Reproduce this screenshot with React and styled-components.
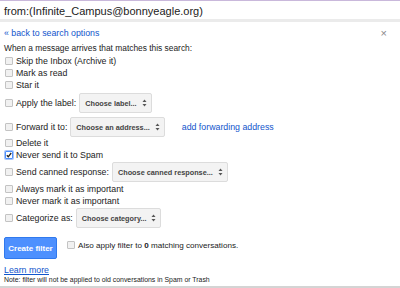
import React from 'react';
import styled, { createGlobalStyle } from 'styled-components';

const GlobalStyle = createGlobalStyle`
    html, body {
        margin: 0;
        padding: 0;
        background: #fff;
    }
    body {
        font-family: 'Liberation Sans', Arial, sans-serif;
        color: #222;
        width: 400px;
        height: 288px;
        overflow: hidden;
    }
`;

const PAGE = styled.div`
    width: 400px;
    height: 288px;
    display: flex;
    flex-direction: column;
    box-sizing: border-box;
    border-bottom: 2px solid #d4d4d4;
`;

const SEARCH_BAR = styled.div`
    height: 22px;
    box-sizing: border-box;
    border-top: 1px solid #c9b8db;
    border-bottom: 3px solid #ebebeb;
    padding: 0 4px;
    font-size: 11px;
    line-height: 20px;
    color: #222;
`;

const PANEL = styled.div`
    flex: 1;
    display: flex;
    flex-direction: column;
    padding: 4px 4px 0 4px;
`;

const TOP_ROW = styled.div`
    display: flex;
    justify-content: space-between;
    align-items: center;
    height: 12px;
    margin-top: 1px;
`;

const LINK = styled.a`
    color: #1155cc;
    font-size: 8.8px;
    text-decoration: ${p => (p.underline ? 'underline' : 'none')};
    margin-left: ${p => p.ml || 0}px;
    cursor: pointer;
`;

const CLOSE = styled.span`
    color: #8a8a8a;
    font-size: 11px;
    margin-right: 9px;
`;

const INTRO = styled.div`
    font-size: 8.4px;
    margin-top: 3px;
    height: 12px;
    line-height: 12px;
`;

const ROW = styled.div`
    display: flex;
    align-items: center;
    height: ${p => (p.tall ? 20 : 12)}px;
    margin-top: ${p => p.mt || 0}px;
    font-size: 8.8px;
    color: #222;
    white-space: nowrap;
`;

const BOX = styled.span`
    width: 8px;
    height: 8px;
    box-sizing: border-box;
    margin: 0 3px 0 1px;
    border: 1px solid ${p => (p.checked ? '#4d90fe' : '#c3c3c3')};
    border-radius: 1px;
    background: ${p => (p.checked ? '#fff' : '#f1f1f1')};
    box-shadow: ${p => (p.checked ? '0 0 0 1px #a9c5f8' : 'none')};
    display: inline-flex;
    align-items: center;
    justify-content: center;
    flex-shrink: 0;
`;

const SELECT = styled.span`
    display: inline-flex;
    align-items: center;
    gap: 5px;
    height: 20px;
    box-sizing: border-box;
    margin-left: 3px;
    padding: 0 4px 0 5px;
    background: #f3f3f3;
    border: 1px solid #dcdcdc;
    border-radius: 2px;
    font-size: 7.3px;
    font-weight: bold;
    color: #444;
`;

const FOOT = styled.div`
    display: flex;
    align-items: flex-start;
    margin-top: 9px;
    height: 22px;
`;

const BUTTON = styled.button`
    width: 53px;
    height: 22px;
    padding: 0;
    background: #4d90fe;
    border: 1px solid #3079ed;
    border-radius: 2px;
    color: #fff;
    font-family: 'Liberation Sans', Arial, sans-serif;
    font-size: 8px;
    font-weight: bold;
    margin-right: 9px;
`;

const ALSO = styled(ROW)`
    margin-top: 2px;
    font-size: 8.1px;
`;

const LEARN = styled.div`
    margin-top: 3px;
    height: 12px;
    line-height: 12px;
`;

const NOTE = styled.div`
    font-size: 6.9px;
    color: #222;
    margin-top: 1px;
    line-height: 9px;
`;

const Arrows = () => (
    <svg width="5" height="8" viewBox="0 0 5 8">
        <path d="M2.5 0.5 L4.5 3 L0.5 3 Z" fill="#555" />
        <path d="M2.5 7.5 L4.5 5 L0.5 5 Z" fill="#555" />
    </svg>
);

const Check = () => (
    <svg width="6" height="6" viewBox="0 0 6 6">
        <path d="M0.8 3.2 L2.3 4.8 L5.2 1" stroke="#222" strokeWidth="1.3" fill="none" />
    </svg>
);

const Option = ({ checked, children, tall, mt }) => (
    <ROW tall={tall} mt={mt}>
        <BOX checked={checked}>{checked && <Check />}</BOX>
        {children}
    </ROW>
);

const Select = ({ label }) => (
    <SELECT>
        {label}
        <Arrows />
    </SELECT>
);

const App = () => {
    return (
        <PAGE>
            <GlobalStyle />
            <SEARCH_BAR>from:(Infinite_Campus@bonnyeagle.org)</SEARCH_BAR>
            <PANEL>
                <TOP_ROW>
                    <LINK>« back to search options</LINK>
                    <CLOSE>×</CLOSE>
                </TOP_ROW>
                <INTRO>When a message arrives that matches this search:</INTRO>
                <Option mt={1}>Skip the Inbox (Archive it)</Option>
                <Option>Mark as read</Option>
                <Option>Star it</Option>
                <Option tall mt={2}>
                    Apply the label:<Select label="Choose label..." />
                </Option>
                <Option tall mt={4}>
                    Forward it to:<Select label="Choose an address..." />
                    <LINK ml={17}>add forwarding address</LINK>
                </Option>
                <Option>Delete it</Option>
                <Option checked>Never send it to Spam</Option>
                <Option tall mt={1}>
                    Send canned response:<Select label="Choose canned response..." />
                </Option>
                <Option mt={1}>Always mark it as important</Option>
                <Option>Never mark it as important</Option>
                <Option tall mt={1}>
                    Categorize as:<Select label="Choose category..." />
                </Option>
                <FOOT>
                    <BUTTON>Create filter</BUTTON>
                    <ALSO>
                        <BOX />
                        Also apply filter to&nbsp;<b>0</b>&nbsp;matching conversations.
                    </ALSO>
                </FOOT>
                <LEARN>
                    <LINK underline>Learn more</LINK>
                </LEARN>
                <NOTE>Note: filter will not be applied to old conversations in Spam or Trash</NOTE>
            </PANEL>
        </PAGE>
    );
};

export default App;
